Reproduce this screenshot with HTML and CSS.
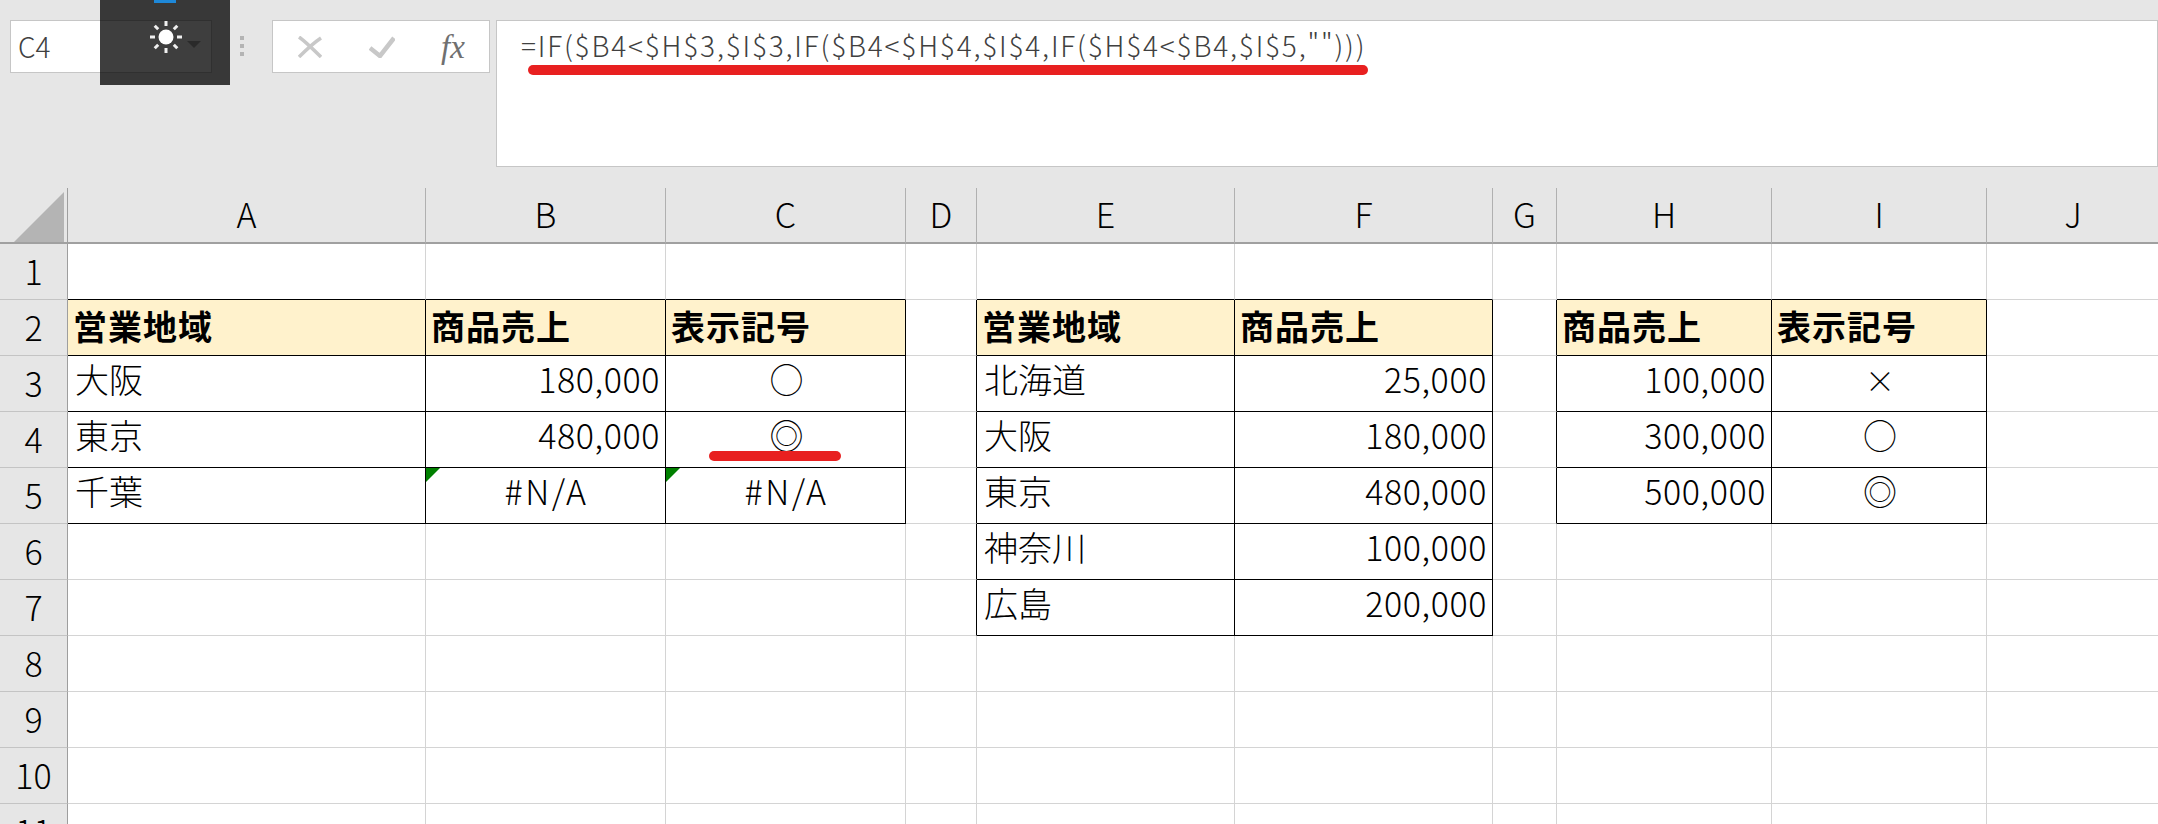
FILE: index.html
```html
<!DOCTYPE html>
<html lang="ja">
<head>
  <meta charset="UTF-8">
  <title>Excel IF formula</title>
  <link rel="stylesheet" href="styles.css">
</head>
<body>
  <div class="formula-bar">
    <div class="name-box">C4</div>
    <div class="grip"><span></span><span></span><span></span></div>
    <div class="fx-box">
      <svg class="fx-icon" width="24" height="22" viewBox="0 0 24 22"><path d="M1 1 C8 6 15 13 23 21 M23 2 C14 8 8 14 1 21" fill="none" stroke="#c8c8c8" stroke-width="3.5"/></svg>
      <svg class="fx-icon" width="26" height="22" viewBox="0 0 26 22"><path d="M1 12 L11 20 L25 2" fill="none" stroke="#c8c8c8" stroke-width="4.5"/></svg>
      <span class="fx-label">fx</span>
    </div>
    <div class="formula-box">=IF($B4&lt;$H$3,$I$3,IF($B4&lt;$H$4,$I$4,IF($H$4&lt;$B4,$I$5,"")))</div>
  </div>

  <table class="sheet">
    <colgroup>
      <col class="w-head"><col class="w-a"><col class="w-b"><col class="w-c"><col class="w-d"><col class="w-e"><col class="w-e"><col class="w-g"><col class="w-h"><col class="w-h"><col class="w-j">
    </colgroup>
    <tr class="col-heads">
      <th class="corner"><svg width="50" height="50" viewBox="0 0 50 50"><path d="M0 50 L50 0 V50 Z" fill="#b4b4b4"/></svg></th>
      <th>A</th><th>B</th><th>C</th><th>D</th><th>E</th><th>F</th><th>G</th><th>H</th><th>I</th><th class="last">J</th>
    </tr>
    <tr>
      <th>1</th>
      <td class="bb"></td><td class="bb"></td><td class="bb"></td><td></td><td class="bb"></td><td class="bb"></td><td></td><td class="bb"></td><td class="bb"></td><td></td>
    </tr>
    <tr>
      <th>2</th>
      <td class="box title">営業地域</td><td class="box title">商品売上</td><td class="box title">表示記号</td><td class="br"></td>
      <td class="box title">営業地域</td><td class="box title">商品売上</td><td class="br"></td>
      <td class="box title">商品売上</td><td class="box title">表示記号</td><td></td>
    </tr>
    <tr>
      <th>3</th>
      <td class="box">大阪</td><td class="box num">180,000</td><td class="box mark">○</td><td class="br"></td>
      <td class="box">北海道</td><td class="box num">25,000</td><td class="br"></td>
      <td class="box num">100,000</td><td class="box mark cross">×</td><td></td>
    </tr>
    <tr>
      <th>4</th>
      <td class="box">東京</td><td class="box num">480,000</td><td class="box mark">◎</td><td class="br"></td>
      <td class="box">大阪</td><td class="box num">180,000</td><td class="br"></td>
      <td class="box num">300,000</td><td class="box mark">○</td><td></td>
    </tr>
    <tr>
      <th>5</th>
      <td class="box">千葉</td><td class="box mark flag">#N/A</td><td class="box mark flag">#N/A</td><td class="br"></td>
      <td class="box">東京</td><td class="box num">480,000</td><td class="br"></td>
      <td class="box num">500,000</td><td class="box mark">◎</td><td></td>
    </tr>
    <tr>
      <th>6</th>
      <td></td><td></td><td></td><td class="br"></td>
      <td class="box">神奈川</td><td class="box num">100,000</td><td></td>
      <td></td><td></td><td></td>
    </tr>
    <tr>
      <th>7</th>
      <td></td><td></td><td></td><td class="br"></td>
      <td class="box">広島</td><td class="box num">200,000</td><td></td>
      <td></td><td></td><td></td>
    </tr>
    <tr><th>8</th><td></td><td></td><td></td><td></td><td></td><td></td><td></td><td></td><td></td><td></td></tr>
    <tr><th>9</th><td></td><td></td><td></td><td></td><td></td><td></td><td></td><td></td><td></td><td></td></tr>
    <tr><th>10</th><td></td><td></td><td></td><td></td><td></td><td></td><td></td><td></td><td></td><td></td></tr>
    <tr><th>11</th><td></td><td></td><td></td><td></td><td></td><td></td><td></td><td></td><td></td><td></td></tr>
  </table>

  <!-- screen-recorder widget sitting over the name box -->
  <div class="overlay">
    <span class="overlay-tab"></span>
    <svg class="sun" width="34" height="34" viewBox="0 0 34 34">
      <circle cx="17" cy="17" r="7.5" fill="#fff"/>
      <g stroke="#f0f0f0" stroke-width="3">
        <path d="M17 1 V6 M17 28 V33 M1 17 H6 M28 17 H33 M5.7 5.7 L9.2 9.2 M24.8 24.8 L28.3 28.3 M28.3 5.7 L24.8 9.2 M9.2 24.8 L5.7 28.3"/>
      </g>
    </svg>
    <span class="overlay-caret"></span>
  </div>

  <!-- red pen marks -->
  <div class="pen pen-formula"></div>
  <div class="pen pen-cell"></div>
</body>
</html>
```

FILE: styles.css
```css
* {
  margin: 0;
  padding: 0;
  box-sizing: border-box;
}

html, body {
  height: 824px;
  overflow: hidden;
}

body {
  position: relative;
  background: #fff;
  color: #000;
  font-family: "Noto Sans CJK JP", "Noto Sans", sans-serif;
  font-weight: 300;
}

/* formula bar */
.formula-bar {
  display: flex;
  align-items: flex-start;
  height: 188px;
  padding: 20px 0 0 10px;
  background: #e6e6e6;
}

.name-box {
  width: 202px;
  height: 53px;
  padding-left: 7px;
  background: #fff;
  border: 1px solid #c6c6c6;
  color: #404040;
  font-size: 28px;
  line-height: 50px;
}

.grip {
  display: flex;
  flex-direction: column;
  gap: 4px;
  width: 4px;
  margin: 16px 28px 0;
}

.grip span {
  height: 4px;
  background: #b4b4b4;
}

.fx-box {
  display: flex;
  align-items: center;
  width: 218px;
  height: 53px;
  padding-left: 25px;
  background: #fff;
  border: 1px solid #c6c6c6;
}

.fx-icon + .fx-icon {
  margin-left: 47px;
}

.fx-label {
  margin-left: 46px;
  color: #707070;
  font-family: "Liberation Serif", serif;
  font-size: 33px;
  font-style: italic;
  line-height: 46px;
}

.formula-box {
  flex: 1;
  height: 147px;
  margin-left: 6px;
  padding: 4px 0 0 24px;
  background: #fff;
  border: 1px solid #c6c6c6;
  color: #404040;
  font-size: 28px;
  letter-spacing: 1.82px;
  line-height: 40px;
  white-space: nowrap;
}

/* sheet */
.sheet {
  border-collapse: separate;
  border-spacing: 0;
  table-layout: fixed;
  width: 2158px;
}

.w-head { width: 68px; }
.w-a { width: 358px; }
.w-b, .w-c { width: 240px; }
.w-d { width: 71px; }
.w-e { width: 258px; }
.w-g { width: 64px; }
.w-h { width: 215px; }
.w-j { width: 172px; }

tr {
  height: 56px;
}

th, td {
  height: 56px;
  font-size: 34px;
  font-weight: 300;
  white-space: nowrap;
}

td {
  padding: 0 5px 10px 7px;
  line-height: 40px;
  border-right: 1px solid #d4d4d4;
  border-bottom: 1px solid #d4d4d4;
}

th {
  padding-bottom: 2px;
  line-height: 50px;
  background: #e6e6e6;
  border-right: 1px solid #9e9e9e;
  border-bottom: 1px solid #c4c4c4;
}

.col-heads th {
  border-right: 1px solid #b0b0b0;
  border-bottom: 2px solid #a0a0a0;
}

.col-heads th.last {
  border-right: 0;
}

.col-heads .corner {
  padding: 4px 3px 0 0;
  border-right: 1px solid #9e9e9e;
  text-align: right;
  line-height: 0;
}

.box {
  border-right: 1px solid #000;
  border-bottom: 1px solid #000;
}

.bb {
  border-bottom: 1px solid #000;
}

.br {
  border-right: 1px solid #000;
}

.title {
  padding: 0 0 4px 5px;
  background: #fff2cc;
  font-weight: 700;
  letter-spacing: 1px;
}

.num {
  letter-spacing: 0.6px;
  text-align: right;
}

.mark {
  text-align: center;
}

.cross {
  font-size: 30px;
}

.flag {
  position: relative;
  letter-spacing: 2.5px;
}

.flag::before {
  content: "";
  position: absolute;
  top: 0;
  left: 0;
  border-top: 14px solid #008000;
  border-right: 14px solid transparent;
}

/* floating bits */
.overlay {
  position: absolute;
  top: 0;
  left: 100px;
  width: 130px;
  height: 85px;
  background: rgba(0, 0, 0, 0.757);
}

.overlay-tab {
  position: absolute;
  top: 0;
  left: 54px;
  width: 22px;
  height: 3px;
  background: #1e88d8;
}

.sun {
  position: absolute;
  top: 20px;
  left: 49px;
}

.overlay-caret {
  position: absolute;
  top: 41px;
  left: 87px;
  border-top: 7px solid #2a2a2a;
  border-left: 7.5px solid transparent;
  border-right: 7.5px solid transparent;
}

.pen {
  position: absolute;
  height: 10px;
  background: #e82020;
  border-radius: 5px;
}

.pen-formula {
  top: 65px;
  left: 528px;
  width: 840px;
}

.pen-cell {
  top: 451px;
  left: 709px;
  width: 132px;
}
```
